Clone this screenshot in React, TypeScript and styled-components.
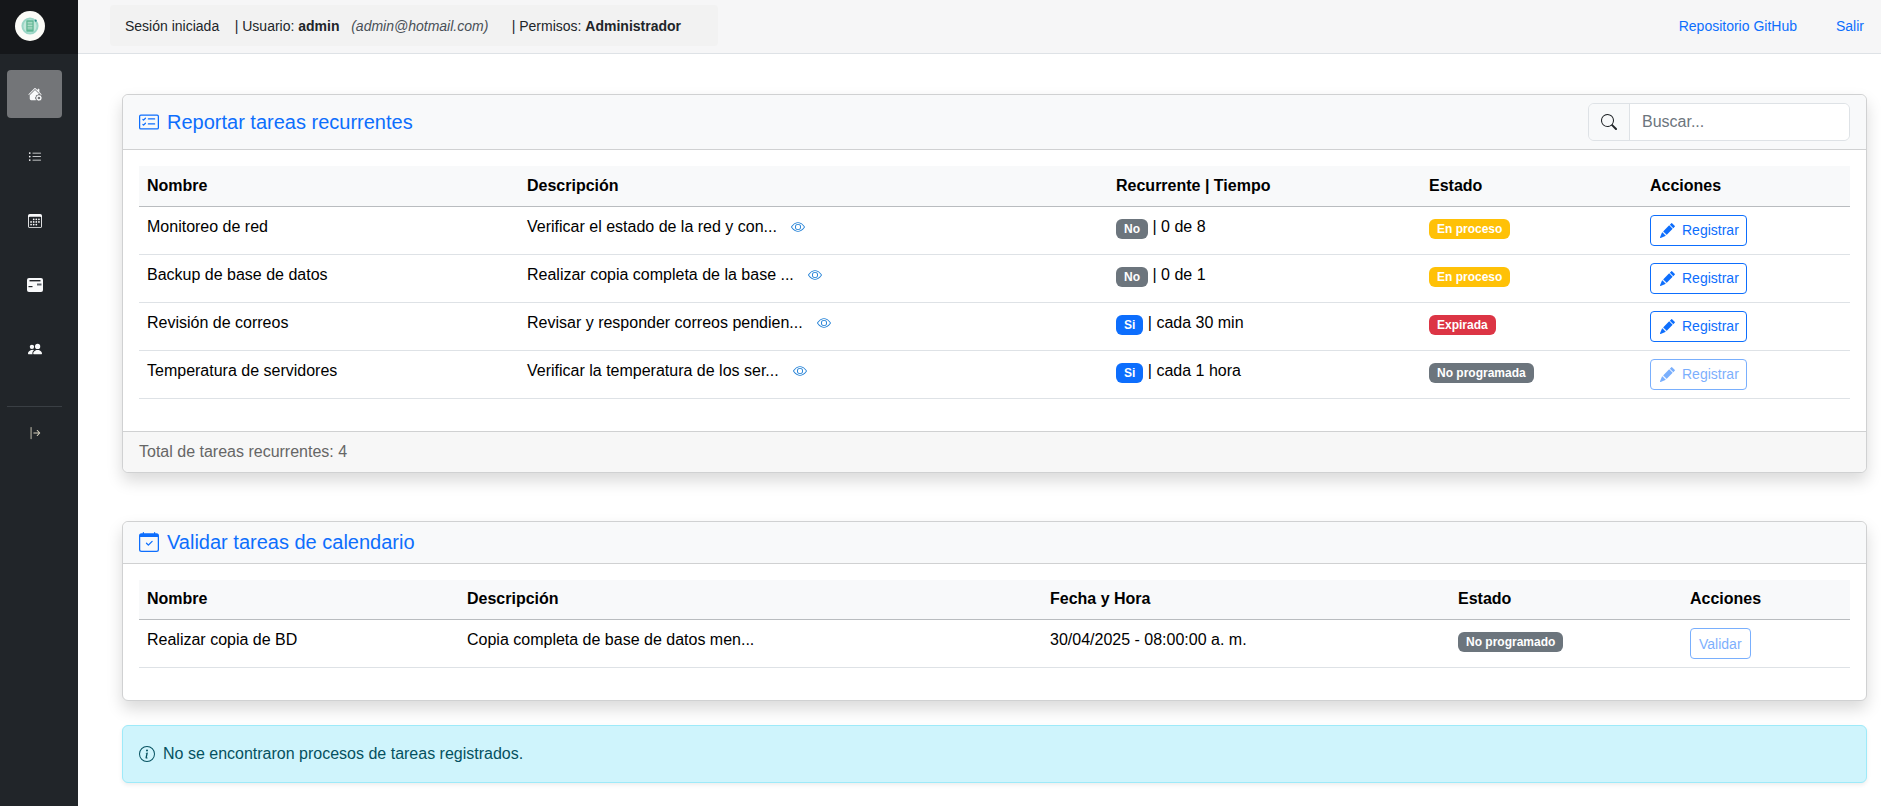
import styled, { createGlobalStyle } from 'styled-components';
import {
  BsHouseGearFill,
  BsListUl,
  BsCalendar3,
  BsPeopleFill,
  BsArrowBarRight,
  BsCardChecklist,
  BsCalendarCheck,
  BsSearch,
  BsEye,
  BsPencilFill,
  BsInfoCircle,
} from 'react-icons/bs';

const GlobalStyle = createGlobalStyle`
  html, body {
    margin: 0;
    padding: 0;
    background: #fff;
    font-family: "Liberation Sans", Arial, sans-serif;
    font-size: 16px;
    color: #000;
  }
  * { box-sizing: border-box; }
`;

const Shell = styled.div`
  display: flex;
  height: 806px;
  overflow: hidden;
`;

const Sidebar = styled.aside`
  width: 78px;
  flex-shrink: 0;
  background: #212529;
  display: flex;
  flex-direction: column;
`;

const Brand = styled.div`
  width: 100%;
  height: 54px;
  background: #15171a;
  padding: 0 0 2px 15px;
  display: flex;
  align-items: center;
`;

const LogoCircle = styled.div`
  width: 30px;
  height: 30px;
  border-radius: 50%;
  background: #fbfbf7;
  display: flex;
  align-items: center;
  justify-content: center;
`;

const NavList = styled.nav`
  display: flex;
  flex-direction: column;
  padding: 16px 0 0 7px;
`;

const NavItem = styled.a<{ $active?: boolean }>`
  width: 55px;
  height: 48px;
  margin-bottom: ${(p) => (p.$active ? 15 : 16)}px;
  border-radius: 4px;
  display: flex;
  align-items: center;
  justify-content: center;
  color: #f8f9fa;
  font-size: 14px;
  background: ${(p) => (p.$active ? '#737578' : 'transparent')};
`;

const NavDivider = styled.hr`
  width: 55px;
  height: 1px;
  border: 0;
  background: #3a3f44;
  margin: 17px 0 2px;
`;

const LogoutItem = styled(NavItem)`
  color: #d9d4c0;
`;

const Main = styled.div`
  flex: 1;
  min-width: 0;
  display: flex;
  flex-direction: column;
`;

const TopBar = styled.header`
  height: 54px;
  flex-shrink: 0;
  background: #f6f6f7;
  border-bottom: 1px solid #dee2e6;
  padding: 5px 17px 0 32px;
  display: flex;
  justify-content: space-between;
`;

const SessionInfo = styled.div`
  width: 608px;
  height: 41px;
  background: #f2f2f2;
  border-radius: 4px;
  padding: 0 15px;
  display: flex;
  align-items: center;
  font-size: 14px;
  color: #212529;
`;

const SessionText = styled.span`
  white-space: pre;
`;

const Muted = styled.em`
  color: #495057;
`;

const TopLinks = styled.div`
  display: flex;
  gap: 39px;
  height: 41px;
  align-items: center;
`;

const TopLink = styled.a`
  color: #0d6efd;
  font-size: 14px;
`;

const Content = styled.main`
  padding: 40px 14px 0 44px;
  display: flex;
  flex-direction: column;
`;

const Card = styled.section<{ $gap: number }>`
  background: #fff;
  border: 1px solid #d0d1d2;
  border-radius: 6px;
  box-shadow: 0 8px 16px rgba(0, 0, 0, 0.15);
  margin-bottom: ${(p) => p.$gap}px;
`;

const CardHeader = styled.div<{ $height: number }>`
  height: ${(p) => p.$height}px;
  background: #f8f9fa;
  border-bottom: 1px solid #d0d1d2;
  border-radius: 6px 6px 0 0;
  padding: 0 16px;
  display: flex;
  align-items: center;
  justify-content: space-between;
`;

const CardTitle = styled.h5`
  margin: 0;
  color: #0d6efd;
  font-size: 20px;
  font-weight: 400;
  display: flex;
  align-items: center;
  gap: 8px;
`;

const SearchGroup = styled.div`
  width: 262px;
  height: 38px;
  display: flex;
  border: 1px solid #dee2e6;
  border-radius: 6px;
  overflow: hidden;
`;

const SearchAddon = styled.span`
  width: 41px;
  background: #f8f9fa;
  border-right: 1px solid #dee2e6;
  display: flex;
  align-items: center;
  justify-content: center;
  color: #212529;
`;

const SearchInput = styled.input`
  flex: 1;
  min-width: 0;
  border: 0;
  outline: 0;
  padding: 0 12px;
  font: inherit;
  &::placeholder {
    color: #6c757d;
    opacity: 1;
  }
`;

const CardBody = styled.div`
  padding: 16px 16px 32px;
`;

const CardFooter = styled.div`
  height: 41px;
  background: #f7f7f7;
  border-top: 1px solid #d0d1d2;
  border-radius: 0 0 6px 6px;
  padding: 0 16px;
  display: flex;
  align-items: center;
  color: #666;
`;

const Table = styled.table`
  width: 100%;
  border-collapse: collapse;
  table-layout: fixed;
`;

const Th = styled.th<{ $width: number }>`
  width: ${(p) => p.$width}px;
  height: 40px;
  padding: 0 8px;
  background: #f8f9fa;
  border-bottom: 1px solid #b9bcbf;
  text-align: left;
  font-weight: 700;
`;

const Td = styled.td`
  height: 48px;
  padding: 8px;
  border-bottom: 1px solid #dee2e6;
  vertical-align: top;
  line-height: 24px;
`;

const EyeIcon = styled(BsEye)`
  color: #1f7fd6;
  font-size: 14px;
  margin-left: 14px;
  vertical-align: -2px;
`;

const Badge = styled.span<{ $bg: string }>`
  display: inline-block;
  padding: 4px 8px;
  border-radius: 6px;
  background: ${(p) => p.$bg};
  color: #fff;
  font-size: 12px;
  font-weight: 700;
  line-height: 12px;
  vertical-align: -1px;
`;

const OutlineButton = styled.button<{ $disabled?: boolean }>`
  height: 31px;
  padding: 0 7px;
  background: #fff;
  border: 1px solid #0d6efd;
  border-radius: 4px;
  color: #0d6efd;
  font: inherit;
  font-size: 14px;
  display: inline-flex;
  align-items: center;
  gap: 5px;
  opacity: ${(p) => (p.$disabled ? 0.55 : 1)};
  svg {
    font-size: 15px;
    margin: 0 2px;
  }
`;

const ValidateButton = styled(OutlineButton)`
  padding: 0 8px;
`;

const Alert = styled.div`
  height: 58px;
  background: #cff4fc;
  border: 1px solid #9eeaf9;
  border-radius: 6px;
  box-shadow: 0 2px 4px rgba(0, 0, 0, 0.075);
  padding: 0 16px;
  display: flex;
  align-items: center;
  gap: 8px;
  color: #055160;
  font-size: 16px;
`;

const recurrentes = [
  { nombre: 'Monitoreo de red', desc: 'Verificar el estado de la red y con...', rec: false, tiempo: '0 de 8', estado: 'En proceso', color: '#ffc107', off: false },
  { nombre: 'Backup de base de datos', desc: 'Realizar copia completa de la base ...', rec: false, tiempo: '0 de 1', estado: 'En proceso', color: '#ffc107', off: false },
  { nombre: 'Revisión de correos', desc: 'Revisar y responder correos pendien...', rec: true, tiempo: 'cada 30 min', estado: 'Expirada', color: '#dc3545', off: false },
  { nombre: 'Temperatura de servidores', desc: 'Verificar la temperatura de los ser...', rec: true, tiempo: 'cada 1 hora', estado: 'No programada', color: '#6c757d', off: true },
];

const Logo = () => (
  <svg width="18" height="18" viewBox="0 0 22 22">
    <circle cx="11" cy="11" r="10.5" fill="#9ad6c6" />
    <circle cx="11" cy="11" r="8" fill="#c3e7da" />
    <rect x="6.5" y="4" width="9" height="14" rx="1" fill="#5db592" />
    <path d="M8 6.5h6M8 8.5h6M8 10.5h6M8 12.5h6M8 14.5h6" stroke="#d7f0e4" strokeWidth="0.9" />
    <circle cx="18" cy="4.5" r="1.3" fill="#2b8f8a" />
  </svg>
);

// tarjeta del menu lateral, no hay una igual en los paquetes de iconos
const CardIcon = () => (
  <svg width="16" height="16" viewBox="0 0 16 16">
    <rect x="0" y="1" width="16" height="14" rx="2" fill="currentColor" />
    <rect x="2.5" y="3" width="11" height="1.4" fill="#212529" />
    <rect x="10" y="6.5" width="4.5" height="2" fill="#5c636a" />
    <rect x="1.5" y="9" width="4" height="1.2" fill="#212529" />
  </svg>
);

const App = () => {
  return (
    <>
      <GlobalStyle />
      <Shell>
        <Sidebar>
          <Brand>
            <LogoCircle>
              <Logo />
            </LogoCircle>
          </Brand>
          <NavList>
            <NavItem $active><BsHouseGearFill /></NavItem>
            <NavItem><BsListUl /></NavItem>
            <NavItem><BsCalendar3 /></NavItem>
            <NavItem><CardIcon /></NavItem>
            <NavItem><BsPeopleFill /></NavItem>
            <NavDivider />
            <LogoutItem><BsArrowBarRight /></LogoutItem>
          </NavList>
        </Sidebar>
        <Main>
          <TopBar>
            <SessionInfo>
              <SessionText>
                {'Sesión iniciada    | Usuario: '}
                <b>admin</b>
                {'   '}
                <Muted>(admin@hotmail.com)</Muted>
                {'      | Permisos: '}
                <b>Administrador</b>
              </SessionText>
            </SessionInfo>
            <TopLinks>
              <TopLink>Repositorio GitHub</TopLink>
              <TopLink>Salir</TopLink>
            </TopLinks>
          </TopBar>
          <Content>
            <Card $gap={48}>
              <CardHeader $height={55}>
                <CardTitle><BsCardChecklist size={20} />Reportar tareas recurrentes</CardTitle>
                <SearchGroup>
                  <SearchAddon><BsSearch size={16} /></SearchAddon>
                  <SearchInput placeholder="Buscar..." />
                </SearchGroup>
              </CardHeader>
              <CardBody>
                <Table>
                  <thead>
                    <tr>
                      <Th $width={380}>Nombre</Th>
                      <Th $width={589}>Descripción</Th>
                      <Th $width={313}>Recurrente | Tiempo</Th>
                      <Th $width={221}>Estado</Th>
                      <Th $width={208}>Acciones</Th>
                    </tr>
                  </thead>
                  <tbody>
                    {recurrentes.map((t) => (
                      <tr key={t.nombre}>
                        <Td>{t.nombre}</Td>
                        <Td>{t.desc}<EyeIcon /></Td>
                        <Td>
                          <Badge $bg={t.rec ? '#0d6efd' : '#6c757d'}>{t.rec ? 'Si' : 'No'}</Badge> | {t.tiempo}
                        </Td>
                        <Td><Badge $bg={t.color}>{t.estado}</Badge></Td>
                        <Td>
                          <OutlineButton $disabled={t.off}><BsPencilFill />Registrar</OutlineButton>
                        </Td>
                      </tr>
                    ))}
                  </tbody>
                </Table>
              </CardBody>
              <CardFooter>Total de tareas recurrentes: 4</CardFooter>
            </Card>
            <Card $gap={24}>
              <CardHeader $height={42}>
                <CardTitle><BsCalendarCheck size={20} />Validar tareas de calendario</CardTitle>
              </CardHeader>
              <CardBody>
                <Table>
                  <thead>
                    <tr>
                      <Th $width={320}>Nombre</Th>
                      <Th $width={583}>Descripción</Th>
                      <Th $width={408}>Fecha y Hora</Th>
                      <Th $width={232}>Estado</Th>
                      <Th $width={168}>Acciones</Th>
                    </tr>
                  </thead>
                  <tbody>
                    <tr>
                      <Td>Realizar copia de BD</Td>
                      <Td>Copia completa de base de datos men...</Td>
                      <Td>30/04/2025 - 08:00:00 a. m.</Td>
                      <Td><Badge $bg="#6c757d">No programado</Badge></Td>
                      <Td><ValidateButton $disabled>Validar</ValidateButton></Td>
                    </tr>
                  </tbody>
                </Table>
              </CardBody>
            </Card>
            <Alert><BsInfoCircle size={16} />No se encontraron procesos de tareas registrados.</Alert>
          </Content>
        </Main>
      </Shell>
    </>
  );
};

export default App;
